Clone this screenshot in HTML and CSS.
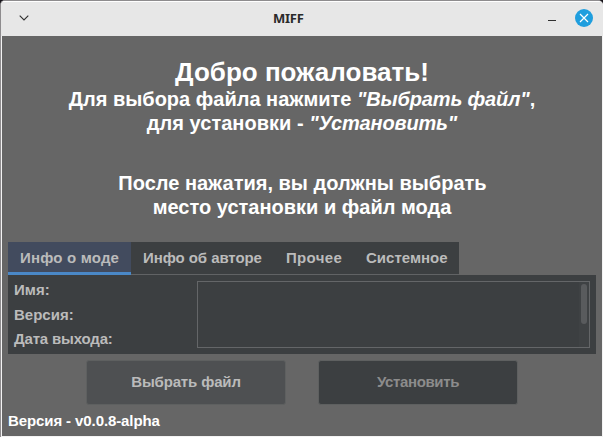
FILE: index.html
```html
<!DOCTYPE html>
<html lang="ru">
<head>
<meta charset="utf-8">
<title>MIFF</title>
<link rel="stylesheet" href="styles.css">
</head>
<body>
<div class="window">
  <header class="titlebar">
    <svg class="menu-icon" width="10" height="6" viewBox="0 0 10 6"><path d="M.7 .7 5 5 9.300 .7"/></svg>
    <span class="title">MIFF</span>
    <div class="controls">
      <span class="minimize"></span>
      <svg class="close" width="18" height="18" viewBox="0 0 18 18"><circle cx="9" cy="9" r="9"/><path d="M5 5l8 8M13 5l-8 8"/></svg>
    </div>
  </header>
  <main class="content">
    <section class="intro">
      <h1>Добро пожаловать!</h1>
      <p class="line1">Для выбора файла нажмите <i>"Выбрать файл"</i>,</p>
      <p class="line2">для установки - <i>"Установить"</i></p>
      <p class="gap">После нажатия, вы должны выбрать</p>
      <p>место установки и файл мода</p>
    </section>
    <nav class="tabs">
      <span class="tab active">Инфо о моде</span>
      <span class="tab t2">Инфо об авторе</span>
      <span class="tab t3">Прочее</span>
      <span class="tab t4">Системное</span>
    </nav>
    <section class="panel">
      <div class="labels"><div>Имя:</div><div>Версия:</div><div class="date">Дата выхода:</div></div>
      <div class="textarea"><div class="track"><div class="thumb"></div></div></div>
    </section>
    <div class="buttons">
      <button class="btn choose">Выбрать файл</button>
      <button class="btn install" disabled>Установить</button>
    </div>
    <footer class="version">Версия - v0.0.8-alpha</footer>
  </main>
</div>
</body>
</html>
```
FILE: styles.css
```css
* { box-sizing: border-box; }
body {
  margin: 0;
  background: #17141a;
  font: bold 15px/18px "Liberation Sans", Arial, sans-serif;
  overflow: hidden;
}
.window {
  width: 603px;
  height: 437px;
  border-top: 1px solid #8e8c8e;
  border-left: 1px solid #8e8c8e;
  border-radius: 5px 5px 0 0;
  background: #f3f3f3;
  overflow: hidden;
}
.titlebar {
  height: 35px;
  border-top: 1px solid #fff;
  background: #e7e7e7;
  display: grid;
  grid-template-columns: 254px auto 1fr;
  align-items: center;
  padding: 0 10px 2px 18px;
}
.menu-icon { fill: none; stroke: #303030; stroke-width: 1.1; }
.title {
  font: bold 13px/18px "Noto Sans", sans-serif;
  letter-spacing: -.25px;
  color: #2a2a2a;
}
.controls { display: flex; justify-content: flex-end; align-items: center; gap: 19px; }
.minimize { width: 8px; height: 1px; background: #303030; margin-top: 5px; }
.close circle { fill: #1f9ede; }
.close path { fill: none; stroke: #fff; stroke-width: 1.2; }
.content {
  margin: 0 1px 1px;
  height: 400px;
  background: #666;
  padding: 23px 6px 0;
}
.intro { height: 183px; color: #fff; text-align: center; }
h1, p { margin: 0; white-space: nowrap; }
h1 { font-size: 26px; line-height: 26px; margin-bottom: 2px; }
p { font-size: 20px; line-height: 24px; }
.line1 i, .line2 i { letter-spacing: -.16px; }
.line2 { letter-spacing: .03px; }
.gap { margin-top: 36px; padding-left: 1px; }
.tabs { display: flex; width: 451px; height: 33px; color: #bbb; }
.tab {
  background: #3c3f41;
  border-bottom: 1px solid #616365;
  padding: 7px 0 0 12px;
  white-space: nowrap;
}
.active { width: 123px; background: #424b5e; border-bottom: 3px solid #4a88c7; letter-spacing: .18px; }
.t2 { width: 143px; letter-spacing: -.07px; }
.t3 { width: 80px; letter-spacing: .33px; }
.t4 { width: 105px; }
.panel {
  height: 79px;
  background: #3c3f41;
  display: flex;
  justify-content: space-between;
  padding: 6px;
  color: #bbb;
}
.labels { line-height: 24.500px; margin-top: -3px; }
.date { letter-spacing: -.17px; }
.textarea { width: 393px; height: 67px; border: 1px solid #646668; display: flex; justify-content: flex-end; }
.track { width: 10px; background: #3f4244; padding: 2px; }
.thumb { width: 6px; height: 40px; border-radius: 3px; background: #595b5d; }
.buttons { display: flex; gap: 32px; padding: 6px 0 0 78px; }
.btn {
  width: 200px;
  height: 45px;
  border: 1px solid #5e6060;
  border-radius: 3px;
  padding: 0 0 1px;
  font: inherit;
}
.choose { background: #4e5052; color: #bbb; letter-spacing: -.15px; }
.install { background: #3c3f41; color: #8c8c8c; letter-spacing: -.36px; }
.version { color: #fff; margin-top: 7px; letter-spacing: -.1px; }
```
